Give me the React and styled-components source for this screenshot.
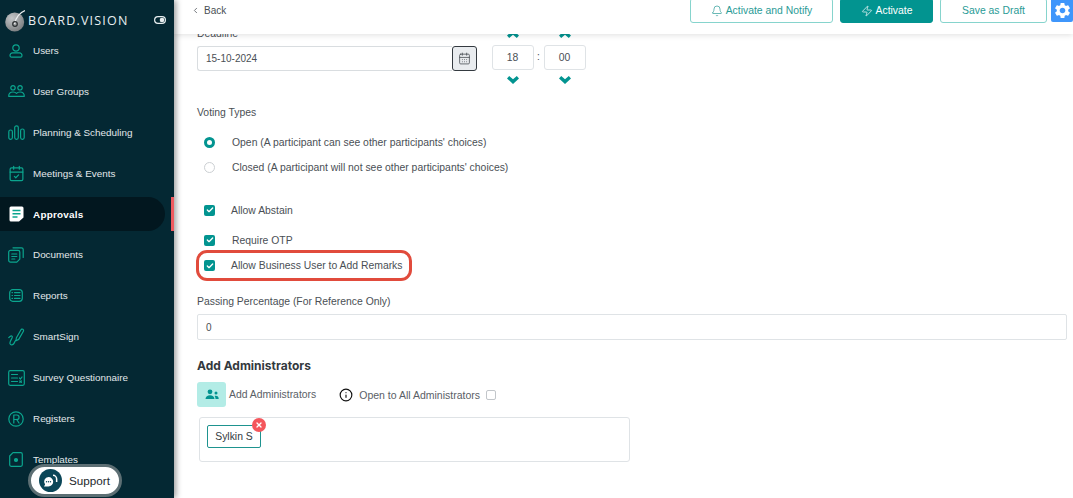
import React from 'react'
import styled, { createGlobalStyle } from 'styled-components'
import { Bell, Zap, ChevronLeft, CalendarDays, CalendarCheck, Check, X, Info } from 'lucide-react'
import { MdSettings } from 'react-icons/md'

const GlobalStyle = createGlobalStyle`
  html, body { margin: 0; padding: 0; background: #fff; }
  body { font-family: "Liberation Sans", Arial, sans-serif; color: #4a4f55; }
  * { box-sizing: border-box; }
`

const Page = styled.div`
  display: flex;
  width: 1073px;
  height: 498px;
  overflow: hidden;
  position: relative;
`

const Sidebar = styled.aside`
  position: relative;
  width: 174px;
  flex: none;
  background: #042833;
  box-shadow: 2px 0 6px rgba(0, 0, 0, .4);
  z-index: 3;
`

const Brand = styled.div`
  display: flex;
  align-items: center;
  height: 33px;
  padding: 7px 0 0 5px;
  color: #e8eef0;
  font-family: "Open Sans", sans-serif;
  font-size: 12.5px;
  letter-spacing: 1.2px;
`

const BrandToggle = styled.span`
  margin-left: 25px;
  display: flex;
`

const Menu = styled.nav`
  display: flex;
  flex-direction: column;
  padding-top: .5px;
`

const MenuItem = styled.div`
  display: flex;
  align-items: center;
  height: 34px;
  margin-bottom: 6.9px;
  margin-right: 9px;
  padding-left: 6px;
  border-radius: 0 17px 17px 0;
  background: ${p => (p.$active ? '#02171f' : 'transparent')};
  color: ${p => (p.$active ? '#fff' : '#e3e9eb')};
  font-size: 9.9px;
  font-weight: ${p => (p.$active ? 700 : 400)};
  letter-spacing: ${p => (p.$active ? '.25px' : '0')};
`

const MenuIcon = styled.span`
  width: 20px;
  height: 20px;
  margin-right: 7px;
  display: flex;
  align-items: center;
  justify-content: center;
  color: #0ba58e;
`

const ScrollMark = styled.div`
  position: absolute;
  left: 171px;
  top: 197px;
  width: 3px;
  height: 34px;
  background: #ef5a5f;
`

const SupportPill = styled.div`
  position: absolute;
  left: 28px;
  top: 464px;
  width: 94px;
  height: 33px;
  display: flex;
  align-items: center;
  gap: 7px;
  padding-left: 8px;
  background: #fff;
  border: 3px solid #5d6f74;
  border-radius: 17px;
  color: #1f2a2e;
  font-size: 11.7px;
`

const SupportIcon = styled.span`
  width: 23px;
  height: 23px;
  border-radius: 50%;
  background: #0b4658;
  display: flex;
  align-items: center;
  justify-content: center;
`

const Main = styled.main`
  flex: 1;
  display: flex;
  flex-direction: column;
  min-width: 0;
`

const TopBar = styled.header`
  height: 34px;
  flex: none;
  display: flex;
  align-items: flex-start;
  justify-content: space-between;
  background: #fff;
  box-shadow: 0 1px 6px rgba(0, 0, 0, .13);
  position: relative;
  z-index: 2;
`

const BackLink = styled.div`
  display: flex;
  align-items: center;
  gap: 4px;
  height: 21px;
  margin-left: 17px;
  font-size: 10px;
`

const Actions = styled.div`
  display: flex;
  align-items: flex-start;
  margin-top: -2px;
`

const ActionButton = styled.button`
  height: 25px;
  width: ${p => p.$w}px;
  margin-right: 7px;
  display: flex;
  align-items: center;
  justify-content: center;
  gap: 3px;
  border: 1px solid ${p => (p.$solid ? '#029490' : '#86d4cd')};
  border-radius: 3px;
  background: ${p => (p.$solid ? '#029490' : '#fff')};
  color: ${p => (p.$solid ? '#fff' : '#2a9b96')};
  font: 400 10.4px "Liberation Sans", Arial, sans-serif;
  padding: 0;
`

const GearButton = styled.div`
  width: 22px;
  height: 24px;
  margin-left: -3px;
  background: #3f96fb;
  border-radius: 2px;
  display: flex;
  align-items: center;
  justify-content: center;
  color: #fff;
`

const Content = styled.div`
  flex: 1;
  overflow: hidden;
  padding: 0 6px 0 23px;
`

const ScrollInner = styled.div`
  margin-top: -6px;
`

const FieldLabel = styled.div`
  font-size: 10.4px;
  line-height: 12px;
`

const DateRow = styled.div`
  display: flex;
  align-items: flex-start;
`

const DateField = styled.div`
  display: flex;
  margin-top: 6px;
`

const DateInput = styled.div`
  width: 255px;
  height: 25px;
  padding-left: 8px;
  display: flex;
  align-items: center;
  border: 1px solid #d9dde0;
  border-right: 0;
  border-radius: 3px 0 0 3px;
  font-size: 10px;
`

const DateButton = styled.div`
  width: 25px;
  height: 25px;
  display: flex;
  align-items: center;
  justify-content: center;
  background: #e9ecef;
  border: 1px solid #343a40;
  border-radius: 3px;
`

const TimeGroup = styled.div`
  display: flex;
  margin-left: 14px;
`

const TimeColumn = styled.div`
  width: 43px;
  display: flex;
  flex-direction: column;
  align-items: center;
`

const TimeBox = styled.div`
  width: 42px;
  height: 25px;
  margin: 7px 0 6px;
  display: flex;
  align-items: center;
  justify-content: center;
  border: 1px solid #dfe3e6;
  border-radius: 3px;
  font-size: 10.4px;
`

const TimeColon = styled.span`
  width: 9px;
  padding-top: 23px;
  text-align: center;
  font-size: 10px;
`

const Chevron = styled.svg`
  display: block;
  width: 12px;
  height: 8px;
  margin: ${p => (p.$up ? '2px' : '0')} 0 0 1px;
  fill: #029490;
  transform: ${p => (p.$up ? 'scaleY(-1)' : 'none')};
`

const SectionLabel = styled(FieldLabel)`
  margin-top: 23px;
`

const RadioList = styled.div`
  margin-top: 11px;
`

const RadioRow = styled.div`
  display: flex;
  align-items: center;
  height: 25px;
  padding-left: 7px;
  gap: 17px;
  font-size: 10.4px;
`

const RadioDot = styled.span`
  width: 11px;
  height: 11px;
  flex: none;
  border-radius: 50%;
  border: ${p => (p.$on ? '3.5px solid #029490' : '1px solid #ccd0d3')};
  background: #fff;
`

const CheckRow = styled.div`
  display: flex;
  align-items: center;
  height: 22px;
  padding-left: 7px;
  margin-top: ${p => p.$top || 0}px;
  gap: ${p => p.$gap || 16}px;
  font-size: 10.4px;
`

const CheckBox = styled.span`
  width: 11px;
  height: 11px;
  flex: none;
  border-radius: 2px;
  background: #029490;
  color: #fff;
  display: flex;
  align-items: center;
  justify-content: center;
`

const Highlight = styled.div`
  width: 216px;
  height: 31px;
  margin: -1px 0 0 -1px;
  padding-left: 1px;
  border: 3px solid #e14b3c;
  border-radius: 11px;
  display: flex;
  align-items: center;
`

const HighlightRow = styled(CheckRow)`
  margin-left: -3px;
`

const Percent = styled.div`
  margin-top: 15px;
`

const PercentInput = styled.div`
  height: 26px;
  margin-top: 6px;
  padding-left: 8px;
  display: flex;
  align-items: center;
  border: 1px solid #dfe3e6;
  border-radius: 2px;
  font-size: 10px;
`

const Heading = styled.h3`
  margin: 18px 0 0;
  font: 700 12px/16px Inter, sans-serif;
  color: #33393e;
`

const AdminRow = styled.div`
  display: flex;
  align-items: center;
  margin-top: 8px;
  font-size: 10.4px;
  color: #5a6066;
`

const AdminIcon = styled.span`
  width: 29px;
  height: 25px;
  margin-right: 3px;
  border-radius: 3px;
  background: #b3ece6;
  color: #029490;
  display: flex;
  align-items: center;
  justify-content: center;
`

const OpenAll = styled.span`
  display: flex;
  align-items: center;
  gap: 6px;
  margin-left: 23px;
  font-size: 10.5px;
`

const SmallBox = styled.span`
  width: 10px;
  height: 10px;
  border: 1px solid #c2c6ca;
  border-radius: 2px;
`

const ChipBox = styled.div`
  width: 431px;
  height: 45px;
  margin: 10px 0 0 2px;
  padding: 7px;
  border: 1px solid #dfe3e6;
  border-radius: 3px;
`

const Chip = styled.span`
  position: relative;
  display: inline-flex;
  align-items: center;
  justify-content: center;
  width: 54px;
  height: 23px;
  border: 1px solid #1e938f;
  border-radius: 2px;
  color: #33393e;
  font-size: 10.4px;
`

const ChipRemove = styled.span`
  position: absolute;
  top: -8px;
  right: -6px;
  width: 14px;
  height: 14px;
  border-radius: 50%;
  background: #f4565c;
  color: #fff;
  display: flex;
  align-items: center;
  justify-content: center;
`

const ArrowHead = ({ up }) => (
  <Chevron viewBox="0 0 12 8" $up={up}>
    <path d="M0 2.400 2.200 0 6 3.200 9.800 0 12 2.400 6 8z" />
  </Chevron>
)

const Logo = () => (
  <svg width="20" height="24" viewBox="0 0 20 24" style={{ marginRight: 3, flex: 'none' }}>
    <defs>
      <radialGradient id="logoFill" cx=".35" cy=".3" r=".9">
        <stop offset="0" stopColor="#c4c6c8" />
        <stop offset="1" stopColor="#6d7072" />
      </radialGradient>
    </defs>
    <circle cx="9.700" cy="14" r="9.500" fill="url(#logoFill)" />
    <path d="M20 2.500C15 4.500 11 8.500 9.500 16" stroke="#eceeef" strokeWidth="1.300" fill="none" />
    <circle cx="10" cy="16" r="2.300" fill="none" stroke="#2b2f31" strokeWidth="1.200" />
  </svg>
)

const icon = { fill: 'none', stroke: 'currentColor', strokeWidth: 1.200, strokeLinejoin: 'round', strokeLinecap: 'round' }

const UserIcon = () => (
  <svg width="14" height="14" viewBox="0 0 14 14" {...icon}>
    <circle cx="7" cy="4" r="3.200" />
    <path d="M3.500 8.800h7c1.300 0 2.500 1.300 2.500 2.600 0 .9-.6 1.800-1.500 1.800h-9C1.600 13.200 1 12.300 1 11.400c0-1.300 1.200-2.600 2.500-2.600z" />
  </svg>
)

const GroupsIcon = () => (
  <svg width="17" height="12" viewBox="0 0 17 12" {...icon}>
    <circle cx="5" cy="2.800" r="2.200" />
    <circle cx="12" cy="2.800" r="2.200" />
    <path d="M.7 11.300c0-3 1.500-4.300 4.300-4.300 1.500 0 2.700.5 3.500 1.400.8-.9 2-1.400 3.500-1.400 2.800 0 4.300 1.300 4.300 4.300z" />
  </svg>
)

const BarsIcon = () => (
  <svg width="17" height="15" viewBox="0 0 17 15" {...icon}>
    <rect x=".8" y="5" width="3.600" height="9.300" rx="1.800" />
    <rect x="6.700" y=".8" width="3.600" height="13.500" rx="1.800" />
    <rect x="12.600" y="4" width="3.600" height="10.300" rx="1.800" />
  </svg>
)

const ApprovalIcon = () => (
  <svg width="15" height="16" viewBox="0 0 15 16">
    <path d="M2 .5h11a1.500 1.500 0 0 1 1.500 1.500v9.500L10 15.500H2A1.500 1.500 0 0 1 .5 14V2A1.500 1.500 0 0 1 2 .5z" fill="#fff" />
    <path d="M3.500 4.500h8M3.500 7.700h8M3.500 11h5" stroke="#0ba58e" strokeWidth="1.600" />
  </svg>
)

const DocumentsIcon = () => (
  <svg width="16" height="16" viewBox="0 0 16 16" {...icon}>
    <path d="M5 .8h8.500c.9 0 1.700.8 1.700 1.700v8" />
    <path d="M2.500 3.300H10c1 0 1.800.8 1.800 1.800v7l-3 3H2.500c-1 0-1.800-.8-1.800-1.800V5.100c0-1 .8-1.800 1.800-1.800z" />
    <path d="M3.800 7h5M3.800 9.500h5M3.800 12h3" />
  </svg>
)

const ReportsIcon = () => (
  <svg width="14" height="13" viewBox="0 0 14 13" {...icon}>
    <rect x=".7" y=".7" width="12.600" height="11.600" rx="3" />
    <path d="M5.500 3.600H11M5.500 6.500H11M5.500 9.400H11M3 3.600h.5M3 6.500h.5M3 9.400h.5" />
  </svg>
)

const SmartSignIcon = () => (
  <svg width="17" height="18" viewBox="0 0 17 18" {...icon}>
    <path d="M8.300 10 13 1.800c.4-.7 1.200-.9 1.900-.5.7.4.9 1.200.5 1.900l-4.700 8.200-2.600 1.300z" />
    <path d="M.8 9.600c1-1.300 3-2.400 3.500-1 .6 1.500-3 4.500-2.300 7 .5 1.900 3 1.700 4-.2.700-1.300 1-2 1.500-3" />
  </svg>
)

const SurveyIcon = () => (
  <svg width="17" height="16" viewBox="0 0 17 16" {...icon}>
    <rect x=".7" y=".7" width="15.600" height="14.600" rx="1.500" />
    <path d="M3.500 4.500h6M3.500 8h6M3.500 11.500h6M11.500 8l1 1 1.500-2M11.800 11l1.600 1.400M13.400 11l-1.600 1.400" />
  </svg>
)

const RegistersIcon = () => (
  <svg width="16" height="16" viewBox="0 0 16 16" {...icon}>
    <circle cx="8" cy="8" r="7.200" />
    <path d="M5.800 12V4h3a2.200 2.200 0 0 1 0 4.500h-3M8.700 8.500 11 12" />
  </svg>
)

const TemplatesIcon = () => (
  <svg width="14" height="15" viewBox="0 0 14 15" {...icon}>
    <path d="M4 .7h7.800c.8 0 1.500.7 1.500 1.500v10.600c0 .8-.7 1.500-1.500 1.500H2.200c-.8 0-1.500-.7-1.500-1.500V4z" />
    <circle cx="7" cy="8" r="1.500" fill="currentColor" />
  </svg>
)

const ToggleIcon = () => (
  <svg width="12" height="8" viewBox="0 0 12 8" fill="none" stroke="#e8eef0" strokeWidth="1.200">
    <rect x=".6" y=".6" width="10.800" height="6.800" rx="3.400" />
    <circle cx="8" cy="4" r="1.700" fill="#e8eef0" />
  </svg>
)

const SupportGlyph = () => (
  <svg width="15" height="13" viewBox="0 0 15 13" fill="#fff">
    <path d="M5.500 3a4.700 4.700 0 0 1 0 9.400H1l1.100-1.800A4.700 4.700 0 0 1 5.500 3z" />
    <path d="M10 .6a4.400 4.400 0 0 1 4.400 4.400v3h-1.500V5A2.900 2.900 0 0 0 10 2.100z" />
    <circle cx="3.500" cy="7.700" r=".7" fill="#0b4658" />
    <circle cx="5.500" cy="7.700" r=".7" fill="#0b4658" />
    <circle cx="7.500" cy="7.700" r=".7" fill="#0b4658" />
  </svg>
)

const AdminGlyph = () => (
  <svg width="14" height="11" viewBox="0 0 14 11" fill="currentColor">
    <circle cx="5" cy="2.800" r="2.400" />
    <path d="M.5 10c0-2.500 2-3.800 4.500-3.800S9.500 7.500 9.500 10z" />
    <circle cx="11" cy="4" r="1.500" />
    <path d="M10.500 10c0-1.500-.3-2.400-1-3 2.500-.6 4.200.6 4.200 3z" />
  </svg>
)

const menu = [
  { label: 'Users', icon: <UserIcon /> },
  { label: 'User Groups', icon: <GroupsIcon /> },
  { label: 'Planning & Scheduling', icon: <BarsIcon /> },
  { label: 'Meetings & Events', icon: <CalendarCheck size={17} strokeWidth={1.7} /> },
  { label: 'Approvals', icon: <ApprovalIcon />, active: true },
  { label: 'Documents', icon: <DocumentsIcon /> },
  { label: 'Reports', icon: <ReportsIcon /> },
  { label: 'SmartSign', icon: <SmartSignIcon /> },
  { label: 'Survey Questionnaire', icon: <SurveyIcon /> },
  { label: 'Registers', icon: <RegistersIcon /> },
  { label: 'Templates', icon: <TemplatesIcon /> },
]

const TinyCheck = () => <Check size={8} strokeWidth={4} />

export default function App() {
  return (
    <Page>
      <GlobalStyle />
      <Sidebar>
        <Brand>
          <Logo />
          BOARD.VISION
          <BrandToggle><ToggleIcon /></BrandToggle>
        </Brand>
        <Menu>
          {menu.map(item => (
            <MenuItem key={item.label} $active={item.active}>
              <MenuIcon>{item.icon}</MenuIcon>
              {item.label}
            </MenuItem>
          ))}
        </Menu>
        <ScrollMark />
        <SupportPill>
          <SupportIcon><SupportGlyph /></SupportIcon>
          Support
        </SupportPill>
      </Sidebar>
      <Main>
        <TopBar>
          <BackLink><ChevronLeft size={9} strokeWidth={2} />Back</BackLink>
          <Actions>
            <ActionButton $w={143}><Bell size={12} strokeWidth={1.4} />Activate and Notify</ActionButton>
            <ActionButton $w={93} $solid><Zap size={12} strokeWidth={1.4} />Activate</ActionButton>
            <ActionButton $w={107}>Save as Draft</ActionButton>
            <GearButton><MdSettings size={19} /></GearButton>
          </Actions>
        </TopBar>
        <Content>
          <ScrollInner>
            <DateRow>
              <div>
                <FieldLabel>Deadline</FieldLabel>
                <DateField>
                  <DateInput>15-10-2024</DateInput>
                  <DateButton><CalendarDays size={13} strokeWidth={1.5} /></DateButton>
                </DateField>
              </div>
              <TimeGroup>
                <TimeColumn>
                  <ArrowHead up />
                  <TimeBox>18</TimeBox>
                  <ArrowHead />
                </TimeColumn>
                <TimeColon>:</TimeColon>
                <TimeColumn>
                  <ArrowHead up />
                  <TimeBox>00</TimeBox>
                  <ArrowHead />
                </TimeColumn>
              </TimeGroup>
            </DateRow>
            <SectionLabel>Voting Types</SectionLabel>
            <RadioList>
              <RadioRow><RadioDot $on />Open (A participant can see other participants' choices)</RadioRow>
              <RadioRow><RadioDot />Closed (A participant will not see other participants' choices)</RadioRow>
            </RadioList>
            <CheckRow $top={19}><CheckBox><TinyCheck /></CheckBox>Allow Abstain</CheckRow>
            <CheckRow $top={8} $gap={17}><CheckBox><TinyCheck /></CheckBox>Require OTP</CheckRow>
            <Highlight>
              <HighlightRow><CheckBox><TinyCheck /></CheckBox>Allow Business User to Add Remarks</HighlightRow>
            </Highlight>
            <Percent>
              <FieldLabel>Passing Percentage (For Reference Only)</FieldLabel>
              <PercentInput>0</PercentInput>
            </Percent>
            <Heading>Add Administrators</Heading>
            <AdminRow>
              <AdminIcon><AdminGlyph /></AdminIcon>
              Add Administrators
              <OpenAll><Info size={14} strokeWidth={2} color="#111" />Open to All Administrators<SmallBox /></OpenAll>
            </AdminRow>
            <ChipBox>
              <Chip>
                Sylkin S
                <ChipRemove><X size={8} strokeWidth={4} /></ChipRemove>
              </Chip>
            </ChipBox>
          </ScrollInner>
        </Content>
      </Main>
    </Page>
  )
}
